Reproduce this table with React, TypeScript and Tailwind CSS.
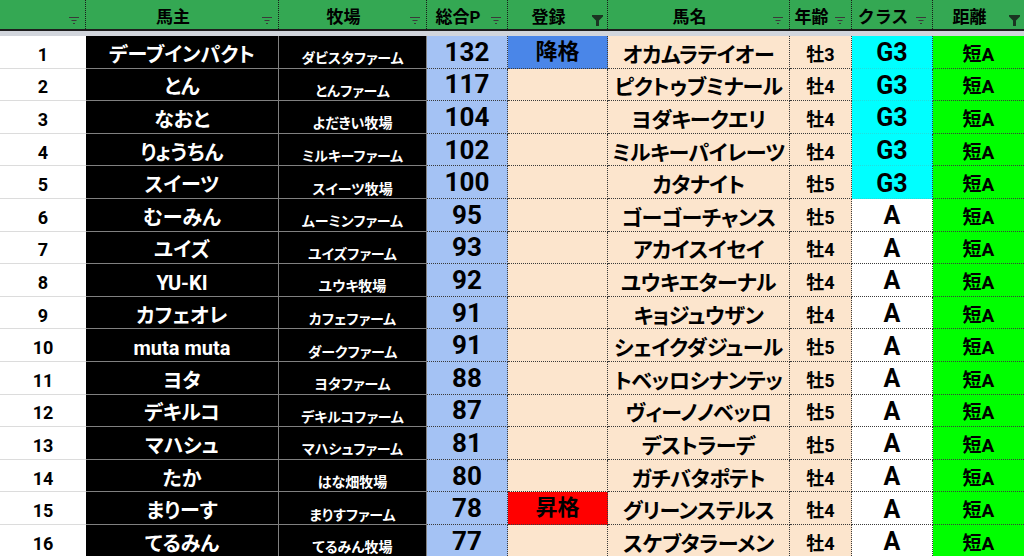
type Row = {
  no: number;
  owner: string;
  farm: string;
  pt: number;
  reg?: string;
  horse: string;
  age: string;
  cls: string;
  dist: string;
};

const rows: Row[] = [
  { no: 1, owner: "デーブインパクト", farm: "ダビスタファーム", pt: 132, reg: "降格", horse: "オカムラテイオー", age: "牡3", cls: "G3", dist: "短A" },
  { no: 2, owner: "とん", farm: "とんファーム", pt: 117, horse: "ピクトゥブミナール", age: "牡4", cls: "G3", dist: "短A" },
  { no: 3, owner: "なおと", farm: "よだきい牧場", pt: 104, horse: "ヨダキークエリ", age: "牡4", cls: "G3", dist: "短A" },
  { no: 4, owner: "りょうちん", farm: "ミルキーファーム", pt: 102, horse: "ミルキーパイレーツ", age: "牡4", cls: "G3", dist: "短A" },
  { no: 5, owner: "スイーツ", farm: "スイーツ牧場", pt: 100, horse: "カタナイト", age: "牡5", cls: "G3", dist: "短A" },
  { no: 6, owner: "むーみん", farm: "ムーミンファーム", pt: 95, horse: "ゴーゴーチャンス", age: "牡5", cls: "A", dist: "短A" },
  { no: 7, owner: "ユイズ", farm: "ユイズファーム", pt: 93, horse: "アカイスイセイ", age: "牡4", cls: "A", dist: "短A" },
  { no: 8, owner: "YU-KI", farm: "ユウキ牧場", pt: 92, horse: "ユウキエターナル", age: "牡4", cls: "A", dist: "短A" },
  { no: 9, owner: "カフェオレ", farm: "カフェファーム", pt: 91, horse: "キョジュウザン", age: "牡4", cls: "A", dist: "短A" },
  { no: 10, owner: "muta muta", farm: "ダークファーム", pt: 91, horse: "シェイクダジュール", age: "牡5", cls: "A", dist: "短A" },
  { no: 11, owner: "ヨタ", farm: "ヨタファーム", pt: 88, horse: "トベッロシナンテッ", age: "牡5", cls: "A", dist: "短A" },
  { no: 12, owner: "デキルコ", farm: "デキルコファーム", pt: 87, horse: "ヴィーノノベッロ", age: "牡5", cls: "A", dist: "短A" },
  { no: 13, owner: "マハシュ", farm: "マハシュファーム", pt: 81, horse: "デストラーデ", age: "牡5", cls: "A", dist: "短A" },
  { no: 14, owner: "たか", farm: "はな畑牧場", pt: 80, horse: "ガチバタポテト", age: "牡4", cls: "A", dist: "短A" },
  { no: 15, owner: "まりーす", farm: "まりすファーム", pt: 78, reg: "昇格", horse: "グリーンステルス", age: "牡4", cls: "A", dist: "短A" },
  { no: 16, owner: "てるみん", farm: "てるみん牧場", pt: 77, horse: "スケブタラーメン", age: "牡4", cls: "A", dist: "短A" },
];

const grid = "grid grid-cols-[86px_193px_148px_81px_100px_182px_62px_81px_91px]";

function SortIcon() {
  return (
    <svg width="10" height="8" viewBox="0 0 10 8" className="absolute right-[6px] top-[17px]">
      <path d="M0 0.5H10M2.5 3.5H7.5M4 6.5H6" stroke="#3a3a3a" strokeWidth="1" fill="none" />
    </svg>
  );
}

function FunnelIcon() {
  return (
    <svg width="11" height="11" viewBox="0 0 11 11" className="absolute right-[4px] top-[15px]">
      <path d="M0 0H11V1.5L7 5.5V11H4V5.5L0 1.5Z" fill="#1b3522" />
    </svg>
  );
}

const headers: { label: string; filtered?: boolean }[] = [
  { label: "" },
  { label: "馬主" },
  { label: "牧場" },
  { label: "総合P" },
  { label: "登録", filtered: true },
  { label: "馬名" },
  { label: "年齢" },
  { label: "クラス" },
  { label: "距離", filtered: true },
];

export default function App() {
  return (
    <div className="h-[556px] w-[1024px] overflow-hidden whitespace-nowrap bg-white font-['Roboto','Noto_Sans_CJK_JP',sans-serif] font-bold text-black">
      <div className={`${grid} h-[31px] border-b-2 border-[#1e1e1e] bg-[#34a853]`}>
        {headers.map((h, i) => (
          <div
            key={i}
            className={`relative flex items-center justify-center pr-[18px] pt-[5px] text-[17px] leading-none ${
              i < headers.length - 1 ? "border-r border-dotted border-[#1a1a1a]" : ""
            }`}
          >
            {h.label}
            {h.filtered ? <FunnelIcon /> : <SortIcon />}
          </div>
        ))}
      </div>
      <div className="h-[5px] bg-[#d1d5dc]" />

      {rows.map((r) => (
        <div key={r.no} className={`${grid} h-[32.6px]`}>
          <div className="flex items-center justify-center border-b border-[#dcdcdc] pt-[6px] text-[18px] leading-none">
            {r.no}
          </div>
          <div className="flex items-center justify-center border-r border-b border-[#808080] bg-black pt-[6px] text-[20px] leading-none text-white [font-feature-settings:'palt']">
            {r.owner}
          </div>
          <div className="flex items-center justify-center border-r border-b border-[#808080] bg-black pt-[13px] text-[14px] leading-none text-white [font-feature-settings:'palt']">
            {r.farm}
          </div>
          <div className="flex items-center justify-center border-r border-b border-dotted border-[#3a3a3a] bg-[#a4c2f4] text-[26px] leading-none">
            {r.pt}
          </div>
          <div
            className={`flex items-center justify-center border-r border-b border-dotted border-[#3a3a3a] text-[22px] leading-none ${
              r.reg === "降格" ? "bg-[#4a86e8]" : r.reg === "昇格" ? "bg-[#ff0000]" : "bg-[#fce5cd]"
            }`}
          >
            {r.reg}
          </div>
          <div className="flex items-center justify-center overflow-hidden border-r border-b border-dotted border-[#3a3a3a] bg-[#fce5cd] pt-[7px] text-[21px] leading-none tracking-[-0.5px] [font-feature-settings:'palt']">
            {r.horse}
          </div>
          <div className="flex items-center justify-center border-r border-b border-dotted border-[#3a3a3a] bg-[#fce5cd] pt-[6px] text-[18px] leading-none">
            {r.age}
          </div>
          <div
            className={`flex items-center justify-center border-r border-dotted border-[#3a3a3a] pt-[2px] text-[25px] leading-none ${
              r.cls === "G3" ? "border-b border-b-solid border-b-[#22dede] bg-[#00ffff]" : "border-b bg-white"
            }`}
          >
            {r.cls}
          </div>
          <div className="flex items-center justify-center border-b border-dotted border-[#3a3a3a] bg-[#00ff00] pt-[5px] text-[19px] leading-none">
            {r.dist}
          </div>
        </div>
      ))}
    </div>
  );
}
